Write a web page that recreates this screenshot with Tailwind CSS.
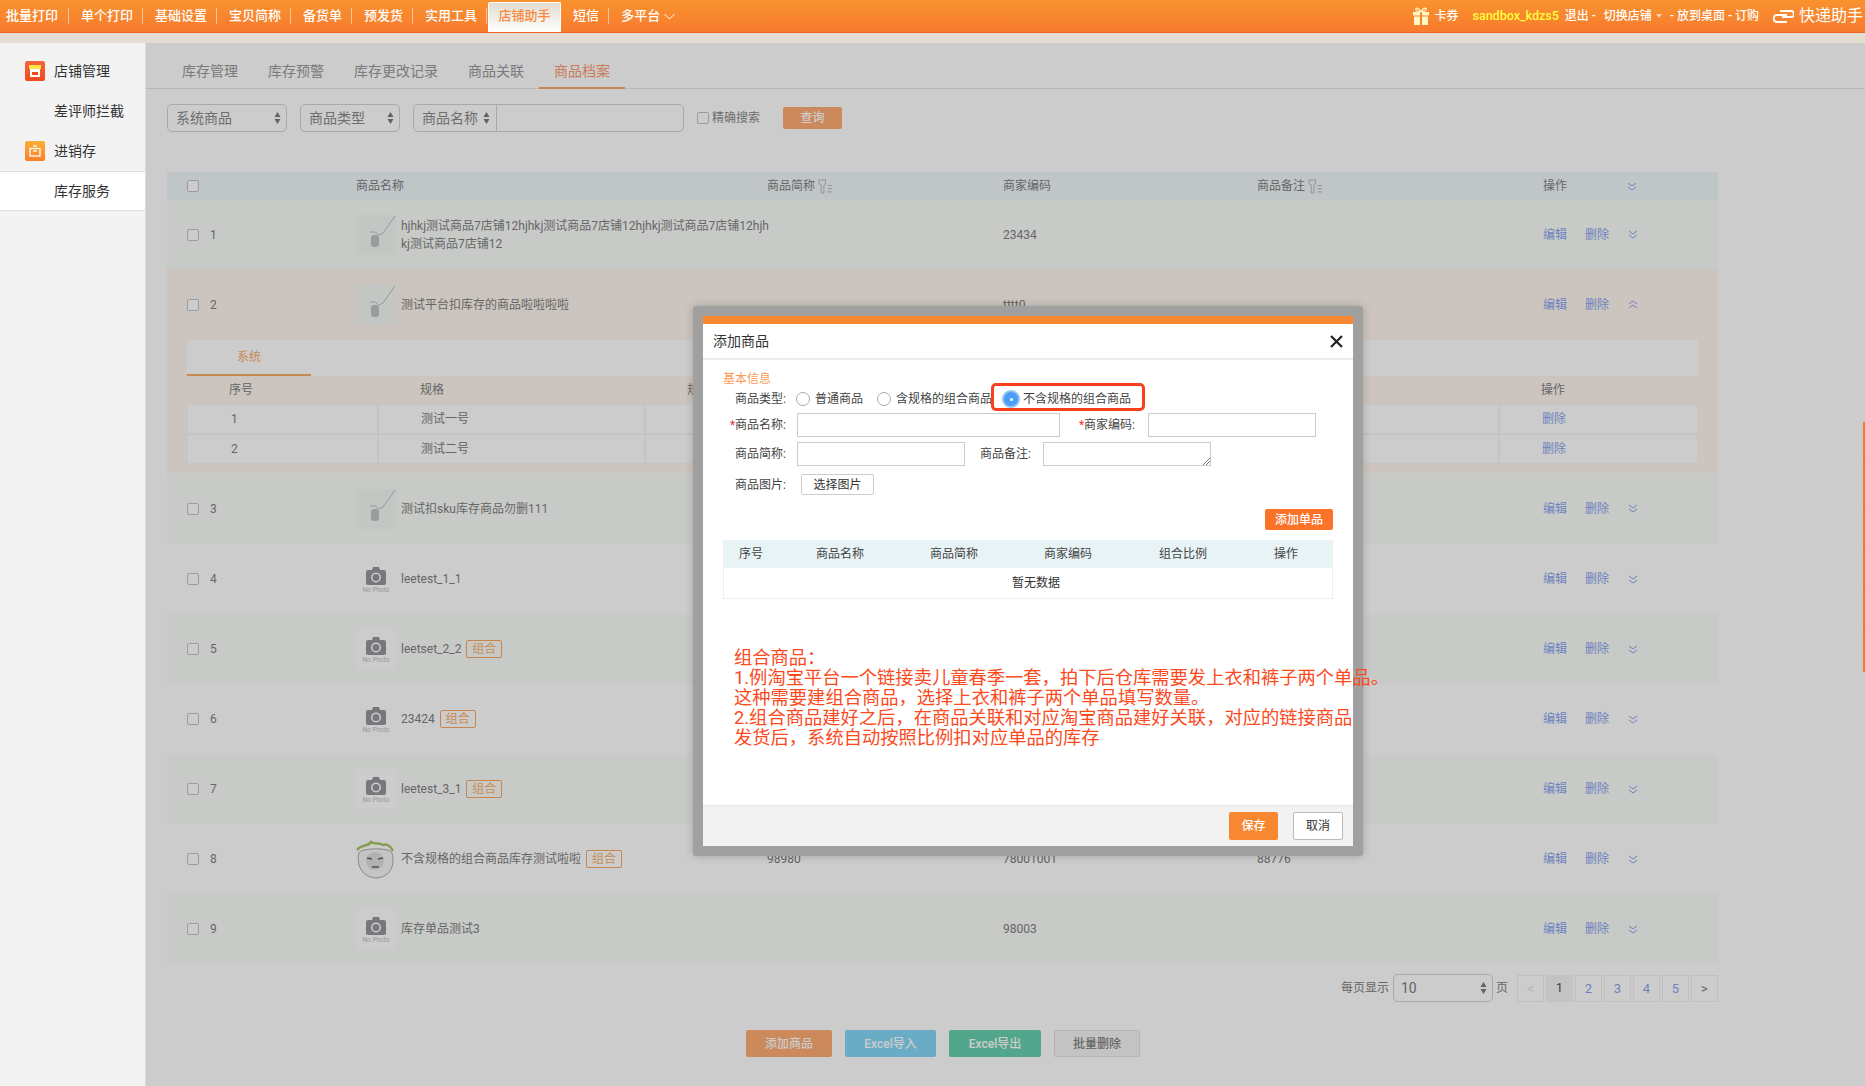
<!DOCTYPE html>
<html lang="zh-CN">
<head>
  <meta charset="UTF-8" />
  <title>商品档案</title>
  <script src="https://cdn.jsdelivr.net/npm/@tailwindcss/browser@4"></script>
</head>
<body class="relative w-[1865px] h-[1086px] overflow-hidden bg-white text-[12px] text-[#808080] font-['Roboto','Noto_Sans_CJK_SC',sans-serif]">

  <!-- top nav -->
  <header class="h-[33px] flex items-stretch border-b border-[#f4652b] bg-linear-to-b from-[#f9922f] to-[#f77b2e] text-white text-[13px] font-medium">
    <nav class="flex items-center h-full pl-[6px]">
      <a class="pr-[10px] mr-[12px] h-[16px] leading-[16px] border-r border-white/50">批量打印</a>
      <a class="pr-[9px] mr-[12px] h-[16px] leading-[16px] border-r border-white/50">单个打印</a>
      <a class="pr-[9px] mr-[12px] h-[16px] leading-[16px] border-r border-white/50">基础设置</a>
      <a class="pr-[9px] mr-[12px] h-[16px] leading-[16px] border-r border-white/50">宝贝简称</a>
      <a class="pr-[9px] mr-[12px] h-[16px] leading-[16px] border-r border-white/50">备货单</a>
      <a class="pr-[9px] mr-[12px] h-[16px] leading-[16px] border-r border-white/50">预发货</a>
      <a class="pr-[9px] h-[16px] leading-[16px] border-r border-white/50">实用工具</a>
      <a class="self-end ml-[1px] w-[73px] h-[30px] leading-[26px] text-center rounded-t-[2px] border-t border-x border-white bg-linear-to-b from-[#e2ddd0] to-white text-[#f78a3e]">店铺助手</a>
      <a class="ml-[12px] pr-[9px] mr-[12px] h-[16px] leading-[16px] border-r border-white/50">短信</a>
      <a class="flex items-center gap-[4px]">多平台
        <svg width="11" height="7" viewBox="0 0 11 7" fill="none" stroke="white" stroke-width="1"><path d="M.5 1l5 5 5-5"/></svg>
      </a>
    </nav>
    <div class="ml-auto flex items-center pr-[2px] text-[12px]">
      <svg width="16" height="18" viewBox="0 0 16 18" fill="#fff7c4">
        <path d="M8 4.500C6 1 2.500.2 2.800 2.500 3 4 5.500 4.500 8 4.500zm0 0c2-3.500 5.500-4.300 5.200-2C13 4 10.500 4.500 8 4.500z" fill="none" stroke="#fff7c4" stroke-width="1.300"/>
        <rect y="5" width="7" height="3.500"/><rect x="9" y="5" width="7" height="3.500"/>
        <rect x="1" y="9.500" width="6" height="8.500"/><rect x="9" y="9.500" width="6" height="8.500"/>
      </svg>
      <span class="ml-[5px] w-[24px]">卡券</span>
      <span class="ml-[14px] text-[12.5px] text-[#ffff3c]">sandbox_kdzs5</span>
      <span class="ml-[6px]">退出 -</span>
      <span class="ml-[8px]">切换店铺</span>
      <span class="ml-[4px] w-0 h-0 border-x-[3px] border-x-transparent border-t-[4px] border-t-white/60"></span>
      <span class="ml-[8px]">- 放到桌面 - 订购</span>
      <svg class="ml-[14px]" width="21" height="13" viewBox="0 0 21 13" fill="none" stroke="white" stroke-width="2"><path d="M7 1h11a2 2 0 0 1 0 6H9"/><path d="M14 12H4a3 3 0 0 1 0-7h10"/></svg>
      <span class="ml-[5px] text-[16px] font-normal">快递助手</span>
    </div>
  </header>
  <div class="h-[10px] bg-[#e4ddd1]"></div>

  <div class="flex h-[1043px]">
    <!-- sidebar -->
    <aside class="w-[146px] shrink-0 pt-[8px] bg-[#f3f3f3] border-r border-[#dcdcdc] text-[14px] text-[#333]">
      <div class="h-[40px] flex items-center pl-[25px]">
        <span class="w-[20px] h-[20px] rounded-[2px] bg-linear-to-b from-[#f2663a] to-[#f04a1c] flex justify-center items-center">
          <svg width="12" height="12" viewBox="0 0 12 12"><rect x="1" y="3" width="10" height="9" fill="white"/><rect x="3" y="7" width="6" height="3" fill="#f04a1c"/><rect x="0" y="0" width="12" height="4" fill="#ffe44a"/></svg>
        </span>
        <span class="ml-[9px]">店铺管理</span>
      </div>
      <div class="h-[40px] flex items-center pl-[54px]">差评师拦截</div>
      <div class="h-[40px] flex items-center pl-[25px]">
        <span class="w-[20px] h-[20px] rounded-[2px] bg-linear-to-b from-[#fcae35] to-[#f97f2a] flex justify-center items-center">
          <svg width="12" height="12" viewBox="0 0 12 12" fill="none" stroke="white" stroke-width="1.300"><path d="M4 1h4"/><rect x="1" y="3.500" width="10" height="7.500"/><path d="M4 6h4"/></svg>
        </span>
        <span class="ml-[9px]">进销存</span>
      </div>
      <div class="h-[40px] flex items-center pl-[54px] bg-white border-y border-[#dfdfdf]">库存服务</div>
    </aside>

    <!-- page under the dialog -->
    <main class="flex-1 text-[12px]">
      <div class="h-[46px] pl-[21px] flex items-stretch border-b border-[#e6e6e6] text-[14px] text-[#999]">
        <a class="px-[15px] pt-[18px] leading-[20px]">库存管理</a>
        <a class="px-[15px] pt-[18px] leading-[20px]">库存预警</a>
        <a class="px-[15px] pt-[18px] leading-[20px]">库存更改记录</a>
        <a class="px-[15px] pt-[18px] leading-[20px]">商品关联</a>
        <a class="px-[15px] pt-[18px] leading-[20px] text-[#fd9a70] border-b-2 border-[#fda766] h-[46px]">商品档案</a>
      </div>

      <div class="mt-[15px] ml-[21px] flex items-center h-[28px] text-[14px] text-[#8a8a8a]">
        <div class="w-[120px] h-[28px] pl-[8px] pr-[5px] flex items-center justify-between border border-[#d4d4d4] rounded-[5px]">系统商品
          <svg width="7" height="14" viewBox="0 0 7 14" fill="#7c7c7c"><path d="M3.500 1l3 5H.5zM.5 8h6l-3 5z"/></svg>
        </div>
        <div class="ml-[13px] w-[100px] h-[28px] pl-[8px] pr-[5px] flex items-center justify-between border border-[#d4d4d4] rounded-[5px]">商品类型
          <svg width="7" height="14" viewBox="0 0 7 14" fill="#7c7c7c"><path d="M3.500 1l3 5H.5zM.5 8h6l-3 5z"/></svg>
        </div>
        <div class="ml-[13px] w-[271px] h-[28px] flex items-center border border-[#d4d4d4] rounded-[5px]">
          <span class="pl-[8px] w-[83px] h-full flex items-center gap-[5px] border-r border-[#d4d4d4]">商品名称
            <svg width="7" height="14" viewBox="0 0 7 14" fill="#7c7c7c"><path d="M3.500 1l3 5H.5zM.5 8h6l-3 5z"/></svg>
          </span>
        </div>
        <input type="checkbox" class="ml-[13px] w-[12px] h-[12px] appearance-none bg-white border border-[#c4c4c4] rounded-[2px]" />
        <span class="ml-[3px] w-[50px] text-[12px]">精确搜索</span>
        <button class="ml-[21px] w-[59px] h-[22px] rounded-[2px] bg-[#feac73] text-white text-[12px] font-medium">查询</button>
      </div>

      <div class="mt-[40px] ml-[21px] w-[1551px]">
        <div class="h-[28px] grid grid-cols-[189px_411px_236px_254px_286px_175px] items-center bg-[#f1f8fa]">
          <div class="pl-[20px] flex"><input type="checkbox" class="w-[12px] h-[12px] appearance-none bg-white border border-[#c4c4c4] rounded-[2px]" /></div>
          <div>商品名称</div>
          <div class="flex items-center gap-[3px]">商品简称
            <svg width="15" height="15" viewBox="0 0 14 14" fill="none" stroke="#bdbdbd"><path d="M1 1h6v3L5.500 6v7H3V6L1 4zM9 6h4M9 9h4M9 12h4"/></svg>
          </div>
          <div>商家编码</div>
          <div class="flex items-center gap-[3px]">商品备注
            <svg width="15" height="15" viewBox="0 0 14 14" fill="none" stroke="#bdbdbd"><path d="M1 1h6v3L5.500 6v7H3V6L1 4zM9 6h4M9 9h4M9 12h4"/></svg>
          </div>
          <div class="flex items-center">操作
            <svg class="ml-[60px]" width="10" height="9" viewBox="0 0 10 9" fill="none" stroke="#8aa4ee"><path d="M1 1l4 3 4-3M1 5l4 3 4-3"/></svg>
          </div>
        </div>

        <!-- row 1 -->
        <div class="h-[69px] grid grid-cols-[189px_411px_236px_254px_286px_175px] items-center bg-[#fbfdfb]">
          <div class="pl-[20px] flex items-center gap-[11px]"><input type="checkbox" class="w-[12px] h-[12px] appearance-none bg-white border border-[#c4c4c4] rounded-[2px]" />1</div>
          <div class="flex items-center gap-[5px]">
            <span class="w-[40px] h-[40px] shrink-0 bg-[#f5f8f6] flex"><svg width="40" height="40" viewBox="0 0 40 40" fill="none" stroke="#bcc2bf"><path d="M39 1L27 18l-4 2-4-3-5 0"/><rect x="15" y="20" width="8" height="12" rx="3" fill="#bfc6c3" stroke="none"/></svg></span>
            <span class="leading-[18px] whitespace-nowrap">hjhkj测试商品7店铺12hjhkj测试商品7店铺12hjhkj测试商品7店铺12hjh<br />kj测试商品7店铺12</span>
          </div>
          <div></div><div>23434</div><div></div>
          <div class="flex items-center text-[#8aa4ee]"><span>编辑</span><span class="ml-[18px]">删除</span>
            <svg class="ml-[19px]" width="10" height="9" viewBox="0 0 10 9" fill="none" stroke="#8aa4ee"><path d="M1 1l4 3 4-3M1 5l4 3 4-3"/></svg>
          </div>
        </div>

        <!-- row 2, opened -->
        <div class="h-[204px] bg-[#fff7ef]">
          <div class="h-[71px] grid grid-cols-[189px_411px_236px_254px_286px_175px] items-center">
            <div class="pl-[20px] flex items-center gap-[11px]"><input type="checkbox" class="w-[12px] h-[12px] appearance-none bg-white border border-[#c4c4c4] rounded-[2px]" />2</div>
            <div class="flex items-center gap-[5px]">
              <span class="w-[40px] h-[40px] shrink-0 bg-[#f5f8f6] flex"><svg width="40" height="40" viewBox="0 0 40 40" fill="none" stroke="#bcc2bf"><path d="M39 1L27 18l-4 2-4-3-5 0"/><rect x="15" y="20" width="8" height="12" rx="3" fill="#bfc6c3" stroke="none"/></svg></span>
              <span>测试平台扣库存的商品啦啦啦啦</span>
            </div>
            <div></div><div>tttt0</div><div></div>
            <div class="flex items-center text-[#8aa4ee]"><span>编辑</span><span class="ml-[18px]">删除</span>
              <svg class="ml-[19px]" width="10" height="9" viewBox="0 0 10 9" fill="none" stroke="#8aa4ee"><path d="M1 4l4-3 4 3M1 8l4-3 4 3"/></svg>
            </div>
          </div>
          <div class="mx-[20px] h-[36px] bg-white">
            <div class="w-[124px] h-[36px] leading-[34px] text-center border-b-2 border-[#f4b066] text-[#f9ae6a]">系统</div>
          </div>
          <div class="mx-[20px] h-[28px] grid grid-cols-[191px_267px_854px_199px] items-center">
            <div class="pl-[42px]">序号</div><div class="pl-[42px]">规格</div><div class="pl-[42px]">规格</div><div class="pl-[42px]">操作</div>
          </div>
          <div class="mx-[20px] h-[30px] grid grid-cols-[191px_267px_854px_199px]">
            <div class="pl-[43px] leading-[28px] border border-[#f6f6f6] bg-white">1</div><div class="pl-[42px] leading-[28px] border border-[#f6f6f6] bg-white">测试一号</div><div class="border border-[#f6f6f6] bg-white"></div><div class="pl-[42px] leading-[28px] border border-[#f6f6f6] bg-white text-[#8aa4ee]">删除</div>
          </div>
          <div class="mx-[20px] h-[30px] grid grid-cols-[191px_267px_854px_199px]">
            <div class="pl-[43px] leading-[28px] border border-[#f6f6f6] bg-white">2</div><div class="pl-[42px] leading-[28px] border border-[#f6f6f6] bg-white">测试二号</div><div class="border border-[#f6f6f6] bg-white"></div><div class="pl-[42px] leading-[28px] border border-[#f6f6f6] bg-white text-[#8aa4ee]">删除</div>
          </div>
        </div>

        <!-- row 3 -->
        <div class="h-[71px] grid grid-cols-[189px_411px_236px_254px_286px_175px] items-center bg-[#fbfdfb]">
          <div class="pl-[20px] flex items-center gap-[11px]"><input type="checkbox" class="w-[12px] h-[12px] appearance-none bg-white border border-[#c4c4c4] rounded-[2px]" />3</div>
          <div class="flex items-center gap-[5px]">
            <span class="w-[40px] h-[40px] shrink-0 bg-[#f5f8f6] flex"><svg width="40" height="40" viewBox="0 0 40 40" fill="none" stroke="#bcc2bf"><path d="M39 1L27 18l-4 2-4-3-5 0"/><rect x="15" y="20" width="8" height="12" rx="3" fill="#bfc6c3" stroke="none"/></svg></span>
            <span>测试扣sku库存商品勿删111</span>
          </div>
          <div></div><div></div><div></div>
          <div class="flex items-center text-[#8aa4ee]"><span>编辑</span><span class="ml-[18px]">删除</span>
            <svg class="ml-[19px]" width="10" height="9" viewBox="0 0 10 9" fill="none" stroke="#8aa4ee"><path d="M1 1l4 3 4-3M1 5l4 3 4-3"/></svg>
          </div>
        </div>

        <!-- row 4 -->
        <div class="h-[70px] grid grid-cols-[189px_411px_236px_254px_286px_175px] items-center bg-white">
          <div class="pl-[20px] flex items-center gap-[11px]"><input type="checkbox" class="w-[12px] h-[12px] appearance-none bg-white border border-[#c4c4c4] rounded-[2px]" />4</div>
          <div class="flex items-center gap-[5px]">
            <span class="w-[40px] h-[40px] shrink-0 bg-white flex flex-col items-center pt-[8px] text-[6.5px] leading-[10px] text-[#c0c0c0]"><svg width="20" height="18" viewBox="0 0 20 18"><path fill="#96969b" fill-rule="evenodd" d="M2 3h4l1-3h6l1 3h4a2 2 0 0 1 2 2v11a2 2 0 0 1-2 2H2a2 2 0 0 1-2-2V5a2 2 0 0 1 2-2zm8 2.500a5 5 0 1 0 0 10 5 5 0 0 0 0-10zm0 1.500a3.500 3.500 0 1 1 0 7 3.500 3.500 0 0 1 0-7z"/></svg>No Photo</span>
            <span>leetest_1_1</span>
          </div>
          <div></div><div></div><div></div>
          <div class="flex items-center text-[#8aa4ee]"><span>编辑</span><span class="ml-[18px]">删除</span>
            <svg class="ml-[19px]" width="10" height="9" viewBox="0 0 10 9" fill="none" stroke="#8aa4ee"><path d="M1 1l4 3 4-3M1 5l4 3 4-3"/></svg>
          </div>
        </div>

        <!-- row 5 -->
        <div class="h-[70px] grid grid-cols-[189px_411px_236px_254px_286px_175px] items-center bg-[#fbfdfb]">
          <div class="pl-[20px] flex items-center gap-[11px]"><input type="checkbox" class="w-[12px] h-[12px] appearance-none bg-white border border-[#c4c4c4] rounded-[2px]" />5</div>
          <div class="flex items-center gap-[5px]">
            <span class="w-[40px] h-[40px] shrink-0 bg-white flex flex-col items-center pt-[8px] text-[6.5px] leading-[10px] text-[#c0c0c0]"><svg width="20" height="18" viewBox="0 0 20 18"><path fill="#96969b" fill-rule="evenodd" d="M2 3h4l1-3h6l1 3h4a2 2 0 0 1 2 2v11a2 2 0 0 1-2 2H2a2 2 0 0 1-2-2V5a2 2 0 0 1 2-2zm8 2.500a5 5 0 1 0 0 10 5 5 0 0 0 0-10zm0 1.500a3.500 3.500 0 1 1 0 7 3.500 3.500 0 0 1 0-7z"/></svg>No Photo</span>
            <span>leetset_2_2</span>
            <span class="w-[36px] h-[18px] leading-[16px] text-center border border-[#f9a862] rounded-[2px] text-[#f9b06c]">组合</span>
          </div>
          <div></div><div></div><div></div>
          <div class="flex items-center text-[#8aa4ee]"><span>编辑</span><span class="ml-[18px]">删除</span>
            <svg class="ml-[19px]" width="10" height="9" viewBox="0 0 10 9" fill="none" stroke="#8aa4ee"><path d="M1 1l4 3 4-3M1 5l4 3 4-3"/></svg>
          </div>
        </div>

        <!-- row 6 -->
        <div class="h-[70px] grid grid-cols-[189px_411px_236px_254px_286px_175px] items-center bg-white">
          <div class="pl-[20px] flex items-center gap-[11px]"><input type="checkbox" class="w-[12px] h-[12px] appearance-none bg-white border border-[#c4c4c4] rounded-[2px]" />6</div>
          <div class="flex items-center gap-[5px]">
            <span class="w-[40px] h-[40px] shrink-0 bg-white flex flex-col items-center pt-[8px] text-[6.5px] leading-[10px] text-[#c0c0c0]"><svg width="20" height="18" viewBox="0 0 20 18"><path fill="#96969b" fill-rule="evenodd" d="M2 3h4l1-3h6l1 3h4a2 2 0 0 1 2 2v11a2 2 0 0 1-2 2H2a2 2 0 0 1-2-2V5a2 2 0 0 1 2-2zm8 2.500a5 5 0 1 0 0 10 5 5 0 0 0 0-10zm0 1.500a3.500 3.500 0 1 1 0 7 3.500 3.500 0 0 1 0-7z"/></svg>No Photo</span>
            <span>23424</span>
            <span class="w-[36px] h-[18px] leading-[16px] text-center border border-[#f9a862] rounded-[2px] text-[#f9b06c]">组合</span>
          </div>
          <div></div><div></div><div></div>
          <div class="flex items-center text-[#8aa4ee]"><span>编辑</span><span class="ml-[18px]">删除</span>
            <svg class="ml-[19px]" width="10" height="9" viewBox="0 0 10 9" fill="none" stroke="#8aa4ee"><path d="M1 1l4 3 4-3M1 5l4 3 4-3"/></svg>
          </div>
        </div>

        <!-- row 7 -->
        <div class="h-[70px] grid grid-cols-[189px_411px_236px_254px_286px_175px] items-center bg-[#fbfdfb]">
          <div class="pl-[20px] flex items-center gap-[11px]"><input type="checkbox" class="w-[12px] h-[12px] appearance-none bg-white border border-[#c4c4c4] rounded-[2px]" />7</div>
          <div class="flex items-center gap-[5px]">
            <span class="w-[40px] h-[40px] shrink-0 bg-white flex flex-col items-center pt-[8px] text-[6.5px] leading-[10px] text-[#c0c0c0]"><svg width="20" height="18" viewBox="0 0 20 18"><path fill="#96969b" fill-rule="evenodd" d="M2 3h4l1-3h6l1 3h4a2 2 0 0 1 2 2v11a2 2 0 0 1-2 2H2a2 2 0 0 1-2-2V5a2 2 0 0 1 2-2zm8 2.500a5 5 0 1 0 0 10 5 5 0 0 0 0-10zm0 1.500a3.500 3.500 0 1 1 0 7 3.500 3.500 0 0 1 0-7z"/></svg>No Photo</span>
            <span>leetest_3_1</span>
            <span class="w-[36px] h-[18px] leading-[16px] text-center border border-[#f9a862] rounded-[2px] text-[#f9b06c]">组合</span>
          </div>
          <div></div><div></div><div></div>
          <div class="flex items-center text-[#8aa4ee]"><span>编辑</span><span class="ml-[18px]">删除</span>
            <svg class="ml-[19px]" width="10" height="9" viewBox="0 0 10 9" fill="none" stroke="#8aa4ee"><path d="M1 1l4 3 4-3M1 5l4 3 4-3"/></svg>
          </div>
        </div>

        <!-- row 8 -->
        <div class="h-[70px] grid grid-cols-[189px_411px_236px_254px_286px_175px] items-center bg-white">
          <div class="pl-[20px] flex items-center gap-[11px]"><input type="checkbox" class="w-[12px] h-[12px] appearance-none bg-white border border-[#c4c4c4] rounded-[2px]" />8</div>
          <div class="flex items-center gap-[5px]">
            <span class="w-[40px] h-[40px] shrink-0 flex"><svg width="40" height="40" viewBox="0 0 40 40"><path d="M3 14c1-5 31-6 33 0 3 12-1 24-16 25C6 38 0 26 3 14z" fill="#f6f6f6" stroke="#aaa"/><ellipse cx="19" cy="22" rx="9" ry="9" fill="#dedede"/><path d="M11 19l5 1M22 20l5-1M16 28h7" stroke="#666" stroke-width="1.500"/><path d="M1 11C7 4 11 9 15 3c4 3 8 0 12 3 4-2 8 2 10 6" fill="none" stroke="#a8c566" stroke-width="2.500"/></svg></span>
            <span>不含规格的组合商品库存测试啦啦</span>
            <span class="w-[36px] h-[18px] leading-[16px] text-center border border-[#f9a862] rounded-[2px] text-[#f9b06c]">组合</span>
          </div>
          <div>98980</div><div>78001001</div><div>88776</div>
          <div class="flex items-center text-[#8aa4ee]"><span>编辑</span><span class="ml-[18px]">删除</span>
            <svg class="ml-[19px]" width="10" height="9" viewBox="0 0 10 9" fill="none" stroke="#8aa4ee"><path d="M1 1l4 3 4-3M1 5l4 3 4-3"/></svg>
          </div>
        </div>

        <!-- row 9 -->
        <div class="h-[70px] grid grid-cols-[189px_411px_236px_254px_286px_175px] items-center bg-[#fbfdfb]">
          <div class="pl-[20px] flex items-center gap-[11px]"><input type="checkbox" class="w-[12px] h-[12px] appearance-none bg-white border border-[#c4c4c4] rounded-[2px]" />9</div>
          <div class="flex items-center gap-[5px]">
            <span class="w-[40px] h-[40px] shrink-0 bg-white flex flex-col items-center pt-[8px] text-[6.5px] leading-[10px] text-[#c0c0c0]"><svg width="20" height="18" viewBox="0 0 20 18"><path fill="#96969b" fill-rule="evenodd" d="M2 3h4l1-3h6l1 3h4a2 2 0 0 1 2 2v11a2 2 0 0 1-2 2H2a2 2 0 0 1-2-2V5a2 2 0 0 1 2-2zm8 2.500a5 5 0 1 0 0 10 5 5 0 0 0 0-10zm0 1.500a3.500 3.500 0 1 1 0 7 3.500 3.500 0 0 1 0-7z"/></svg>No Photo</span>
            <span>库存单品测试3</span>
          </div>
          <div></div><div>98003</div><div></div>
          <div class="flex items-center text-[#8aa4ee]"><span>编辑</span><span class="ml-[18px]">删除</span>
            <svg class="ml-[19px]" width="10" height="9" viewBox="0 0 10 9" fill="none" stroke="#8aa4ee"><path d="M1 1l4 3 4-3M1 5l4 3 4-3"/></svg>
          </div>
        </div>

        <!-- pager -->
        <div class="mt-[10px] h-[28px] flex items-center justify-end">
          <span>每页显示</span>
          <div class="ml-[4px] w-[100px] h-[28px] pl-[7px] pr-[5px] flex items-center justify-between border border-[#d4d4d4] rounded-[5px] text-[14px]">10
            <svg width="7" height="14" viewBox="0 0 7 14" fill="#7c7c7c"><path d="M3.500 1l3 5H.5zM.5 8h6l-3 5z"/></svg>
          </div>
          <span class="ml-[3px] mr-[9px]">页</span>
          <div class="flex gap-[2px] text-[13px] text-[#8aa4ee]">
            <a class="w-[27px] h-[27px] leading-[25px] text-center border border-[#efefef] text-[#e0e0e0]">&lt;</a>
            <a class="w-[27px] h-[27px] leading-[25px] text-center bg-[#f4f4f4] text-[#555]">1</a>
            <a class="w-[27px] h-[27px] leading-[25px] text-center border border-[#efefef]">2</a>
            <a class="w-[27px] h-[27px] leading-[25px] text-center border border-[#efefef]">3</a>
            <a class="w-[27px] h-[27px] leading-[25px] text-center border border-[#efefef]">4</a>
            <a class="w-[27px] h-[27px] leading-[25px] text-center border border-[#efefef]">5</a>
            <a class="w-[27px] h-[27px] leading-[25px] text-center border border-[#efefef] text-[#777]">&gt;</a>
          </div>
        </div>
      </div>

      <div class="mt-[28px] ml-[600px] flex gap-[13px] text-[12px] font-medium text-white">
        <button class="w-[86px] h-[27px] rounded-[2px] bg-[#feac73]">添加商品</button>
        <button class="w-[91px] h-[27px] rounded-[2px] bg-[#85d8f7]">Excel导入</button>
        <button class="w-[92px] h-[27px] rounded-[2px] bg-[#67d0af]">Excel导出</button>
        <button class="w-[86px] h-[27px] rounded-[2px] bg-[#f4f4f4] border border-[#e4e4e4] text-[#808080]">批量删除</button>
      </div>
    </main>
  </div>

  <!-- backdrop -->
  <div class="absolute left-[146px] top-[43px] right-0 bottom-0 bg-black/20"></div>

  <!-- floating side tab -->
  <div class="absolute right-0 top-[422px] w-[2px] h-[250px] flex flex-col">
    <span class="h-[42px] bg-[#f47b2d] border-b border-[#e8601f]"></span>
    <span class="h-[42px] bg-[#f47b2d] border-b border-[#e8601f]"></span>
    <span class="h-[42px] bg-[#f47b2d] border-b border-[#e8601f]"></span>
    <span class="h-[42px] bg-[#f47b2d] border-b border-[#e8601f]"></span>
    <span class="h-[42px] bg-[#f47b2d] border-b border-[#e8601f]"></span>
    <span class="h-[40px] bg-[#f47b2d]"></span>
  </div>

  <!-- dialog -->
  <div class="absolute left-[693px] top-[306px] w-[670px] h-[550px] border-[10px] border-[#a0a0a0] rounded-[3px] bg-white flex flex-col text-[12px] text-[#333] shadow-[0_0_8px_rgba(0,0,0,.2)]">
    <div class="h-[8px] bg-[#f78831] shrink-0"></div>
    <div class="h-[36px] shrink-0 flex items-center justify-between pl-[10px] pr-[10px] border-b-2 border-[#ececec]">
      <span class="text-[14px]">添加商品</span>
      <svg width="13" height="13" viewBox="0 0 13 13" stroke="#222" stroke-width="2.200"><path d="M1 1l11 11M12 1L1 12"/></svg>
    </div>

    <div class="flex-1 relative px-[20px]">
      <div class="pt-[11px] leading-[16px] text-[#fb9a58]">基本信息</div>
      <div class="mt-[1px] h-[22px] flex items-center text-[#444]">
        <span class="w-[63px] text-right">商品类型:</span>
        <span class="ml-[10px] w-[14px] h-[14px] rounded-full border border-[#aaa] bg-white"></span>
        <span class="ml-[5px]">普通商品</span>
        <span class="ml-[14px] w-[14px] h-[14px] rounded-full border border-[#aaa] bg-white"></span>
        <span class="ml-[5px]">含规格的组合商品</span>
        <span class="ml-[12px] w-[14px] h-[14px] rounded-full bg-[#4a9ff5] shadow-[0_0_0_2px_#8fc2f5] flex items-center justify-center"><span class="w-[3px] h-[3px] rounded-full bg-white"></span></span>
        <span class="ml-[5px]">不含规格的组合商品</span>
      </div>
      <!-- red note box drawn over the form -->
      <div class="absolute left-[288px] top-[23px] w-[154px] h-[28px] border-[3px] border-[#f7401c] rounded-[5px]"></div>

      <div class="mt-[3px] h-[24px] flex items-center text-[#444]">
        <span class="w-[63px] text-right"><b class="font-normal text-red-500">*</b>商品名称:</span>
        <input class="ml-[11px] w-[263px] h-[24px] border border-[#ccc]" />
        <span class="ml-[5px] w-[70px] text-right"><b class="font-normal text-red-500">*</b>商家编码:</span>
        <input class="ml-[13px] w-[168px] h-[24px] border border-[#ccc]" />
      </div>
      <div class="mt-[5px] h-[24px] flex items-center text-[#444]">
        <span class="w-[63px] text-right">商品简称:</span>
        <input class="ml-[11px] w-[168px] h-[24px] border border-[#ccc]" />
        <span class="ml-[15px] w-[51px] text-right">商品备注:</span>
        <span class="ml-[12px] w-[168px] h-[24px] border border-[#ccc] flex items-end justify-end">
          <svg width="8" height="8" viewBox="0 0 8 8" stroke="#777"><path d="M1 8l7-7M4 8l4-4"/></svg>
        </span>
      </div>
      <div class="mt-[8px] h-[21px] flex items-center text-[#444]">
        <span class="w-[63px] text-right">商品图片:</span>
        <button class="ml-[15px] w-[73px] h-[21px] border border-[#ccc] rounded-[2px] text-[#333]">选择图片</button>
      </div>
      <div class="mt-[14px] flex justify-end">
        <button class="w-[68px] h-[21px] rounded-[2px] bg-[#fa7329] text-white font-medium">添加单品</button>
      </div>
      <div class="mt-[10px] border border-t-0 border-[#eee]">
        <div class="h-[28px] grid grid-cols-[77px_114px_114px_115px_115px_75px] items-center bg-[#e8f3f6] text-[#444]">
          <span class="pl-[15px]">序号</span><span class="pl-[15px]">商品名称</span><span class="pl-[15px]">商品简称</span><span class="pl-[15px]">商家编码</span><span class="pl-[15px]">组合比例</span><span class="pl-[15px]">操作</span>
        </div>
        <div class="h-[30px] leading-[30px] text-center pl-[16px]">暂无数据</div>
      </div>
      <!-- note pasted on the screenshot, runs past the dialog edge -->
      <div class="mt-[49px] ml-[11px] w-[670px] text-[18.3px] leading-[20px] text-[#fb4a1e] relative z-10">
        <div>组合商品：</div>
        <div>1.例淘宝平台一个链接卖儿童春季一套，拍下后仓库需要发上衣和裤子两个单品。</div>
        <div>这种需要建组合商品，选择上衣和裤子两个单品填写数量。</div>
        <div>2.组合商品建好之后，在商品关联和对应淘宝商品建好关联，对应的链接商品</div>
        <div>发货后，系统自动按照比例扣对应单品的库存</div>
      </div>
    </div>

    <div class="h-[41px] shrink-0 flex items-center justify-end gap-[15px] pr-[10px] bg-[#f2f2f2] border-t border-[#e8e8e8]">
      <button class="w-[49px] h-[28px] rounded-[2px] bg-[#f78831] text-white font-medium">保存</button>
      <button class="w-[50px] h-[28px] rounded-[2px] bg-white border border-[#bbb] text-[#333]">取消</button>
    </div>
  </div>
</body>
</html>
